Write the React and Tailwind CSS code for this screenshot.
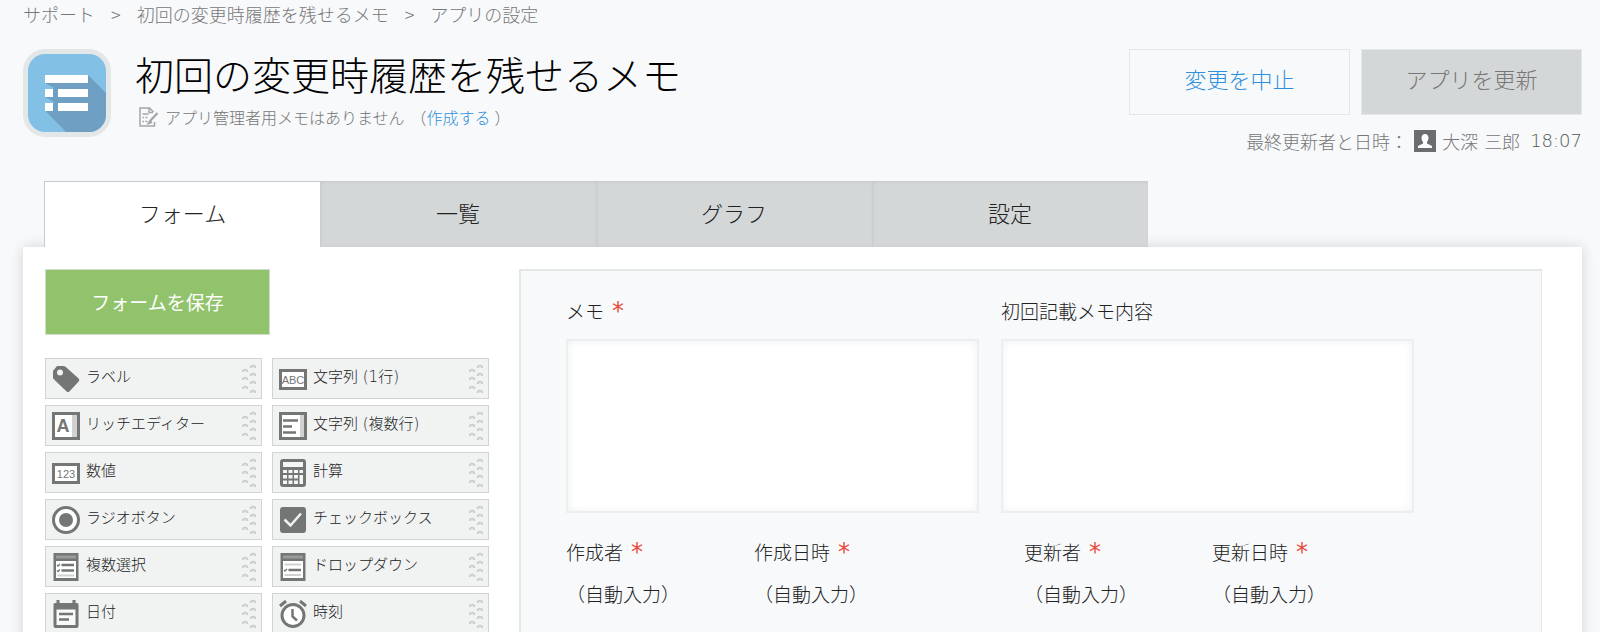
const tabs = ['フォーム', '一覧', 'グラフ', '設定']

const G = '#747575'

function LabelIcon() {
  return (
    <svg width="28" height="28" viewBox="0 0 28 28" aria-hidden="true">
      <path d="M5 1h6.500a3 3 0 0 1 2 .8L26.400 13.300a2.500 2.500 0 0 1 0 3.500L17.400 26.400a2 2 0 0 1-2.800 0L1.600 14A2.500 2.500 0 0 1 1 12V6z" fill={G} />
      <circle cx="8" cy="7.500" r="3" fill="#f1f3f3" />
    </svg>
  )
}

function RichIcon() {
  return (
    <svg width="28" height="28" viewBox="0 0 28 28" aria-hidden="true">
      <rect x="1.500" y="1.500" width="25" height="25" fill="#fff" stroke={G} strokeWidth="3" />
      <rect x="20" y="3" width="5" height="22" fill="#d0d2d2" />
      <text x="11" y="20" textAnchor="middle" fontSize="18" fontWeight="700" fontFamily="Liberation Sans, sans-serif" fill={G}>A</text>
    </svg>
  )
}

function BoxedTextIcon({ children }) {
  return (
    <svg width="28" height="28" viewBox="0 0 28 28" aria-hidden="true">
      <rect x="1.500" y="5.500" width="25" height="18" fill="#fff" stroke={G} strokeWidth="3" />
      <text x="14" y="19" textAnchor="middle" fontSize="11" fontFamily="Liberation Sans, sans-serif" fontWeight="400" fill={G}>{children}</text>
    </svg>
  )
}

function MultiLineIcon() {
  return (
    <svg width="28" height="28" viewBox="0 0 28 28" aria-hidden="true">
      <rect x="1.500" y="1.500" width="25" height="25" fill="#fff" stroke={G} strokeWidth="3" />
      <rect x="21" y="3" width="4" height="22" fill="#d0d2d2" />
      <path d="M4 8.500h15M4 14.500h9M4 20.500h13" stroke={G} strokeWidth="2.500" />
    </svg>
  )
}

function CalcIcon() {
  return (
    <svg width="28" height="28" viewBox="0 0 28 28" aria-hidden="true">
      <rect x="1" y="0" width="26" height="28" rx="3" fill={G} />
      <rect x="4" y="3" width="20" height="5" fill="#f4f5f5" />
      <path d="M4 11h4v3H4zM9.500 11h4v3h-4zM15 11h4v3h-4zM20.500 11h3.500v3h-3.500zM4 16h4v3.500H4zM9.500 16h4v3.500h-4zM15 16h4v3.500h-4zM4 21.500h4V25H4zM9.500 21.500h4V25h-4zM15 21.500h4V25h-4zM20.500 16h3.500v9h-3.500z" fill="#f4f5f5" />
    </svg>
  )
}

function RadioIcon() {
  return (
    <svg width="28" height="28" viewBox="0 0 28 28" aria-hidden="true">
      <circle cx="14" cy="14" r="12.500" fill="#fff" stroke={G} strokeWidth="3" />
      <circle cx="14" cy="14" r="7" fill={G} />
    </svg>
  )
}

function CheckIcon() {
  return (
    <svg width="28" height="28" viewBox="0 0 28 28" aria-hidden="true">
      <rect x="1" y="1" width="26" height="26" rx="3" fill={G} />
      <path d="M5.500 13.500l6 6L22 7.500" fill="none" stroke="#f1f3f3" strokeWidth="2.500" />
    </svg>
  )
}

function MultiSelectIcon() {
  return (
    <svg width="28" height="28" viewBox="0 0 28 28" aria-hidden="true">
      <path d="M1.500 0h25v28h-25z" fill={G} />
      <path d="M4 2.500h20v3H4z" fill="#999a9a" />
      <path d="M4 8h20v17H4z" fill="#fff" />
      <path d="M9.500 12h12.500M9.500 17.500h12.500" stroke={G} strokeWidth="2.500" />
      <path d="M5 12l1 1 2-2M5 17.500l1 1 2-2" fill="none" stroke={G} strokeWidth="1.300" />
      <path d="M5.500 22.500h16.500" stroke="#d0d2d2" strokeWidth="2" />
    </svg>
  )
}

function DropDownIcon() {
  return (
    <svg width="28" height="28" viewBox="0 0 28 28" aria-hidden="true">
      <path d="M1.500 0h25v28h-25z" fill={G} />
      <path d="M4 2.500h20v3H4z" fill="#999a9a" />
      <path d="M4 8h20v17H4z" fill="#fff" />
      <path d="M5.500 11.500h16.500M5.500 22h16.500" stroke="#d0d2d2" strokeWidth="2" />
      <path d="M9.500 17h12.500" stroke={G} strokeWidth="2.500" />
      <path d="M5 17l1 1 2-2" fill="none" stroke={G} strokeWidth="1.300" />
    </svg>
  )
}

function DateIcon() {
  return (
    <svg width="28" height="28" viewBox="0 0 28 28" aria-hidden="true">
      <path d="M4.500 0h3v3h13V0h3v3H25a1.500 1.500 0 0 1 1.500 1.500V26a2 2 0 0 1-2 2h-21a2 2 0 0 1-2-2V4.500A1.500 1.500 0 0 1 3 3h1.500z" fill={G} />
      <path d="M4.500 9.500h19v15.500h-19z" fill="#f8f9f9" />
      <path d="M7 14h14M7 19.500h10" stroke={G} strokeWidth="2.500" />
    </svg>
  )
}

function TimeIcon() {
  return (
    <svg width="28" height="28" viewBox="0 0 28 28" aria-hidden="true">
      <circle cx="14" cy="15.500" r="11" fill="#fff" stroke={G} strokeWidth="3" />
      <path d="M13.500 9v7.500l4.500 4" fill="none" stroke={G} strokeWidth="2.500" />
      <path d="M1 6l6-5M21 1l6 5" stroke={G} strokeWidth="3" />
    </svg>
  )
}

const parts = [
  { label: 'ラベル', icon: <LabelIcon /> },
  { label: '文字列 (1行)', icon: <BoxedTextIcon>ABC</BoxedTextIcon> },
  { label: 'リッチエディター', icon: <RichIcon /> },
  { label: '文字列 (複数行)', icon: <MultiLineIcon /> },
  { label: '数値', icon: <BoxedTextIcon>123</BoxedTextIcon> },
  { label: '計算', icon: <CalcIcon /> },
  { label: 'ラジオボタン', icon: <RadioIcon /> },
  { label: 'チェックボックス', icon: <CheckIcon /> },
  { label: '複数選択', icon: <MultiSelectIcon /> },
  { label: 'ドロップダウン', icon: <DropDownIcon /> },
  { label: '日付', icon: <DateIcon /> },
  { label: '時刻', icon: <TimeIcon /> },
]

const dots = [[3, 8], [3, 16], [3, 25], [11, 4], [11, 12], [11, 20], [11, 29]]

function Grip() {
  return (
    <svg width="14" height="30" viewBox="0 0 14 30" aria-hidden="true">
      {dots.map(([x, y]) => (
        <path
          key={`${x}-${y}`}
          d={`M${x - 2.5} ${y}a2.500 2.500 0 0 1 5 0`}
          fill="#e4e6e6"
          stroke="#c9cccc"
          strokeWidth="1.500"
        />
      ))}
    </svg>
  )
}

function AppIcon() {
  return (
    <svg width="88" height="88" viewBox="0 0 88 88" className="shrink-0" aria-hidden="true">
      <rect width="88" height="88" rx="22" fill="#e3e7e8" />
      <clipPath id="app-icon">
        <rect x="5" y="5" width="78" height="78" rx="17" />
      </clipPath>
      <g clipPath="url(#app-icon)">
        <rect x="5" y="5" width="78" height="78" fill="#82c0e6" />
        <path d="M65 26L83 44V83H43L22 61.500 31 53 22 48 31 39 22 34z" fill="#6f9fc2" />
      </g>
      <path d="M22 26h43v8H22zM22 40h8v8h-8zM35 40h30v8H35zM22 54h8v8h-8zM35 54h30v8H35z" fill="#fff" />
    </svg>
  )
}

function MemoIcon() {
  return (
    <svg width="20" height="20" viewBox="0 0 20 20" fill="none" stroke="#a3a5a6" strokeWidth="1.500" aria-hidden="true">
      <path d="M15.500 15v4H1V1h9.500l4 4" />
      <path d="M10 1v4.500h4" />
      <path d="M3.500 7h6M3.500 10.500h1.500M6.500 10.500h2M3.500 14.500h1.500M6.500 14.500h2" />
      <path d="M18.500 6l-7 7.500-1.500 2.500 3-1" strokeWidth="2.200" />
    </svg>
  )
}

function UserIcon() {
  return (
    <svg width="22" height="22" viewBox="0 0 22 22" aria-hidden="true">
      <rect width="22" height="22" fill="#6c6d6e" />
      <path d="M11 4c2.300 0 3.500 1.700 3.500 4 0 2-.9 3.300-1.500 4v1.500l5 2.500V18H4v-2l5-2.500V12c-.6-.7-1.500-2-1.500-4 0-2.300 1.200-4 3.500-4z" fill="#fff" />
    </svg>
  )
}

function Required() {
  return <span className="ml-2 font-['DejaVu_Sans',sans-serif] text-2xl leading-7 font-normal text-[#e74c3c]">*</span>
}

function MemoField({ id, label, required }) {
  return (
    <div className="w-[413px]">
      <label htmlFor={id} className="flex h-7 items-center">
        {label}
        {required && <Required />}
      </label>
      <textarea
        id={id}
        className="mt-3.5 block h-[174px] w-full resize-none border-2 border-[#eceff0] bg-white shadow-[inset_0_0_8px_#f0f0f0] outline-none"
      />
    </div>
  )
}

function AutoField({ label }) {
  return (
    <div className="w-[188px]">
      <div className="flex h-7 items-center">
        {label}
        <Required />
      </div>
      <div className="mt-3.5 h-7 leading-7">（自動入力）</div>
    </div>
  )
}

export default function App() {
  return (
    <div className="h-screen overflow-hidden bg-[#f8f9fb] pr-[18px] pl-[23px] font-['Noto_Sans_CJK_JP',sans-serif] font-light text-[#222]">
      {/* Breadcrumb */}
      <nav className="flex gap-4 text-lg leading-7 text-[#777]">
        <a href="#support">サポート</a>
        <span>&gt;</span>
        <a href="#app">初回の変更時履歴を残せるメモ</a>
        <span>&gt;</span>
        <span>アプリの設定</span>
      </nav>

      {/* Header */}
      <header className="mt-[21px] flex items-start">
        <AppIcon />
        <div className="ml-6">
          <h1 className="text-[39px] leading-[48px] text-black">初回の変更時履歴を残せるメモ</h1>
          <div className="mt-1 flex items-center pl-1 text-base leading-8 text-[#777]">
            <MemoIcon />
            <span className="ml-1.5">
              アプリ管理者用メモはありません
              <span className="ml-1.5">（</span>
              <a href="#memo" className="mr-1 text-[#2e8fdc]">作成する</a>）
            </span>
          </div>
        </div>
        <div className="ml-auto">
          <div className="flex gap-[11px] text-[22px]">
            <button className="h-[66px] w-[221px] border border-[#e3e7e8] bg-[#f8f9fb] pb-2 text-[#2e8fdc]">変更を中止</button>
            <button className="h-[66px] w-[221px] border border-[#e3e7e8] bg-[#d4d7d7] pb-2 text-[#777]">アプリを更新</button>
          </div>
          <div className="mt-3 flex items-center justify-end text-lg leading-7 text-[#777]">
            <span className="mr-1.5">最終更新者と日時：</span>
            <UserIcon />
            <span className="ml-1.5">大深</span>
            <span className="ml-1.5">三郎</span>
            <span className="ml-2.5 font-['DejaVu_Sans',sans-serif] font-extralight text-[#555]">18:07</span>
          </div>
        </div>
      </header>

      {/* Tabs */}
      <div role="tablist" className="relative z-10 mt-[26px] ml-[21px] flex text-[22px]">
        {tabs.map((tab, i) => (
          <button
            key={tab}
            role="tab"
            aria-selected={i === 0}
            className={`h-[66px] w-[276px] border-t border-[#c8cccc] pb-1 ${
              i === 0 ? 'border-l bg-white' : 'bg-[#d4d7d7] shadow-[inset_1px_0_3px_#c3c8c8]'
            }`}
          >
            {tab}
          </button>
        ))}
      </div>

      <main className="flex items-start bg-white pt-[22px] pr-10 pl-[22px] shadow-[0_0_12px_#d0d2d4]">
        {/* Field palette */}
        <aside className="w-[444px] shrink-0">
          <button className="h-[66px] w-[225px] border border-[#d4dccf] bg-[#91c36c] text-[19px] font-normal text-white">
            フォームを保存
          </button>
          <ul className="mt-[23px] grid grid-cols-2 gap-x-2.5 gap-y-1.5">
            {parts.map(({ label, icon }) => (
              <li key={label} className="flex h-[41px] items-center border border-[#d0d4d4] bg-[#f1f3f3] pr-[5px] pl-1.5 font-['DejaVu_Sans','Noto_Sans_CJK_JP',sans-serif] text-[15px]">
                {icon}
                <span className="mb-0.5 ml-1.5 grow">{label}</span>
                <Grip />
              </li>
            ))}
          </ul>
        </aside>

        {/* Form canvas */}
        <section className="ml-[30px] h-[400px] grow border-t-2 border-r border-l-2 border-[#e3e8e7] bg-[#f8f9fb] pt-[26px] pl-[45px] text-[19px]">
          <div className="flex gap-[22px]">
            <MemoField id="memo" label="メモ" required />
            <MemoField id="first-memo" label="初回記載メモ内容" />
          </div>
          <div className="mt-[25px] flex">
            <AutoField label="作成者" />
            <AutoField label="作成日時" />
            <div className="ml-[82px] flex">
              <AutoField label="更新者" />
              <AutoField label="更新日時" />
            </div>
          </div>
        </section>
      </main>
    </div>
  )
}
